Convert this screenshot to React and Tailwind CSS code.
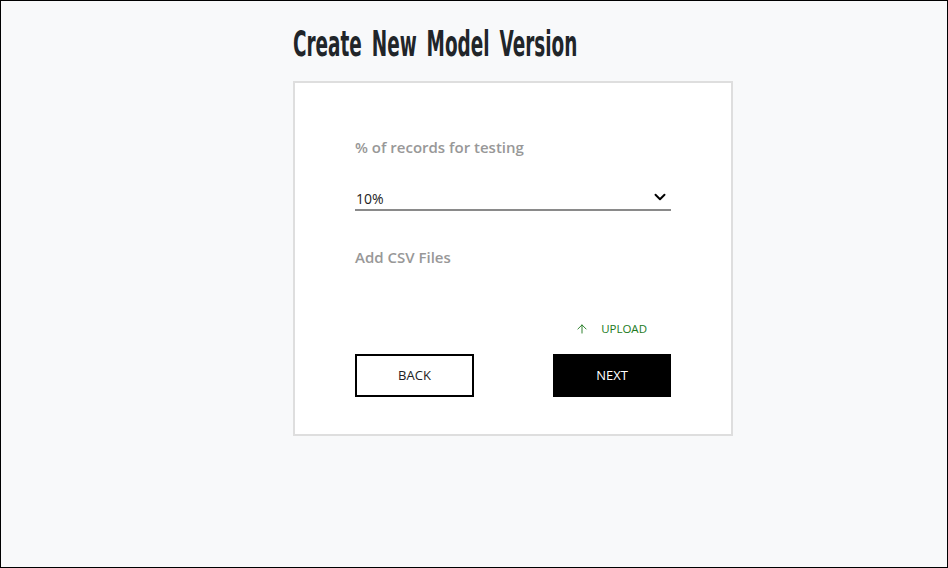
import { ChevronDown, ArrowUp } from 'lucide-react';

const App = () => {
  return (
    <div className="h-[568px] w-[948px] border border-black bg-[#f8f9fa]" style={{ fontFamily: '"Open Sans", "Liberation Sans", sans-serif' }}>
      <div className="w-[440px] ml-[292px] pt-[23px]">
        <h1 className="text-[35px] leading-[40px] font-bold text-[#212529] origin-left scale-x-[0.585] whitespace-nowrap" style={{ fontFamily: '"DejaVu Sans Condensed", "Liberation Sans Narrow", sans-serif', wordSpacing: '6px' }}>
          Create New Model Version
        </h1>

        <div className="mt-[17px] bg-white border-2 border-[#dedede] px-[60px] pt-[54px] pb-[37px]">
          <label className="block text-[15px] font-semibold text-[#989898] leading-[20px]">% of records for testing</label>

          <div className="mt-[32px] flex items-center justify-between border-b-2 border-[#8a8a8a]">
            <span className="text-[14px] text-[#222] leading-[20px] pl-[1px]">10%</span>
            <ChevronDown size={18} strokeWidth={2.6} className="text-black mr-[2px] -mt-[4px]" />
          </div>

          <label className="block mt-[36px] text-[15px] font-semibold text-[#989898] leading-[20px]">Add CSV Files</label>

          <div className="mt-[54px] flex justify-end pr-[24px]">
            <button className="flex items-center gap-[12px] text-[11.5px] text-[#217a21] leading-[16px]">
              <ArrowUp size={14} strokeWidth={1.6} />
              UPLOAD
            </button>
          </div>

          <div className="mt-[17px] flex justify-between">
            <button className="w-[119px] h-[43px] border-2 border-black bg-white text-[13px] text-[#222]">BACK</button>
            <button className="w-[118px] h-[43px] bg-black text-white text-[13px]">NEXT</button>
          </div>
        </div>
      </div>
    </div>
  );
};

export default App;
